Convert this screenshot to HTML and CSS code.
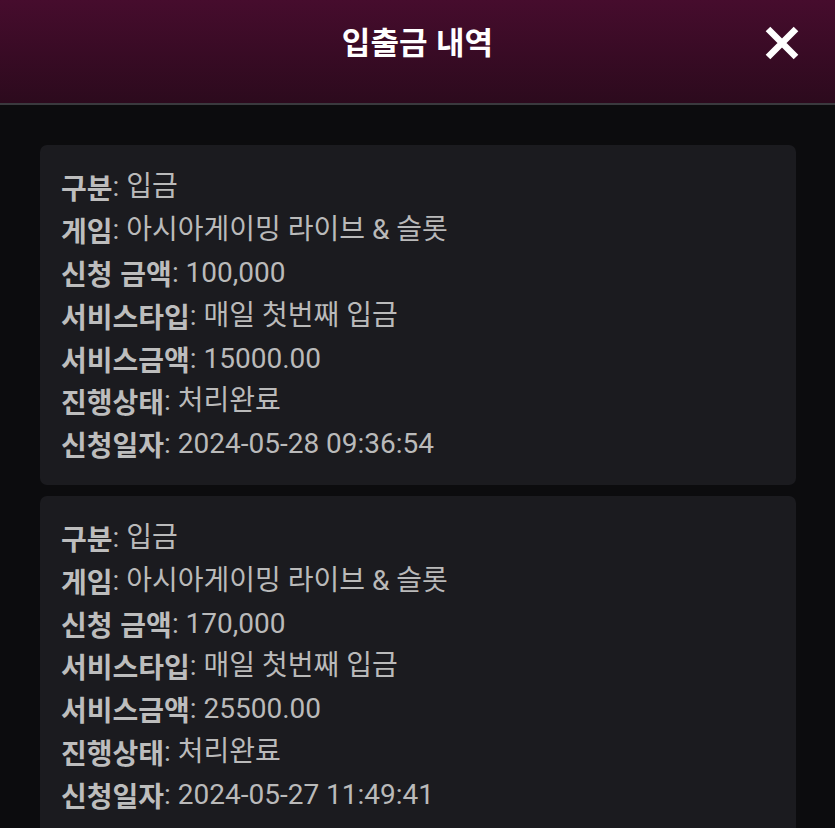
FILE: index.html
```html
<!DOCTYPE html>
<html lang="ko">
<head>
<meta charset="utf-8">
<link rel="stylesheet" href="styles.css">
</head>
<body>
<header class="header">
  <h1 class="title">입출금 내역</h1>
  <button class="close" aria-label="닫기">
    <svg viewBox="0 0 36 36" width="36" height="36"><path d="M4 4 L32 32 M32 4 L4 32" stroke="#fff" stroke-width="6.5" stroke-linecap="butt"/></svg>
  </button>
</header>
<main class="list">
  <section class="card">
    <p><b>구분</b>: 입금</p>
    <p><b>게임</b>: 아시아게이밍 라이브 &amp; 슬롯</p>
    <p><b>신청 금액</b>: 100,000</p>
    <p><b>서비스타입</b>: 매일 첫번째 입금</p>
    <p><b>서비스금액</b>: 15000.00</p>
    <p><b>진행상태</b>: 처리완료</p>
    <p><b>신청일자</b>: 2024-05-28 09:36:54</p>
  </section>
  <section class="card">
    <p><b>구분</b>: 입금</p>
    <p><b>게임</b>: 아시아게이밍 라이브 &amp; 슬롯</p>
    <p><b>신청 금액</b>: 170,000</p>
    <p><b>서비스타입</b>: 매일 첫번째 입금</p>
    <p><b>서비스금액</b>: 25500.00</p>
    <p><b>진행상태</b>: 처리완료</p>
    <p><b>신청일자</b>: 2024-05-27 11:49:41</p>
  </section>
</main>
</body>
</html>
```
FILE: styles.css
```css
html, body {
  margin: 0;
  padding: 0;
  background: #0c0c0e;
  height: 100%;
  overflow: hidden;
}
body {
  font-family: Roboto, "Noto Sans CJK KR", sans-serif;
}
.header {
  box-sizing: border-box;
  height: 105px;
  background: linear-gradient(#460c2d, #2c0a1d);
  border-bottom: 2px solid #3a3a3e;
  display: flex;
  align-items: center;
  justify-content: center;
  position: relative;
}
.title {
  margin: 0 0 22px;
  color: #fff;
  font-family: "Noto Sans CJK KR", sans-serif;
  font-weight: 700;
  font-size: 31px;
  line-height: 1;
}
.close {
  position: absolute;
  right: 35px;
  top: 25px;
  background: none;
  border: 0;
  padding: 0;
  width: 36px;
  height: 36px;
}
.close svg { display: block; }
.list {
  padding: 40px 39px 0 40px;
  display: flex;
  flex-direction: column;
  gap: 11px;
}
.card {
  background: #1b1b1f;
  border-radius: 7px;
  padding: 21px 21px 19px;
  color: #bababa;
  font-size: 28px;
}
.card p {
  margin: 0;
  height: 42.8px;
  display: flex;
  align-items: center;
  white-space: pre;
  line-height: 1;
}
.card b {
  font-family: "Noto Sans CJK KR", sans-serif;
  font-weight: 700;
  color: #bdbdbd;
}
```
